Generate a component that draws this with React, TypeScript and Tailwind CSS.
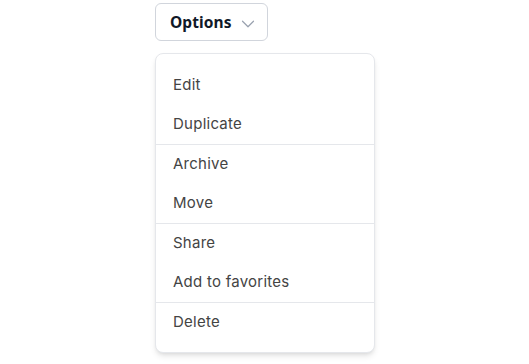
import React from "react";
import { ChevronDown } from "lucide-react";

const groups = [
  ["Edit", "Duplicate"],
  ["Archive", "Move"],
  ["Share", "Add to favorites"],
  ["Delete"],
];

const App = () => {
  return (
    <div className="min-h-[364px] w-full bg-white" style={{ fontFamily: "Inter, sans-serif" }}>
      <div className="ml-[155px] pt-[3px]">
        <button className="flex h-[38px] w-[113px] items-center gap-[5px] rounded-md border border-gray-300 bg-white pt-[2px] pl-[14px] text-[15.5px] font-bold tracking-[0.1px] text-gray-900" style={{ fontFamily: "'Noto Sans', sans-serif" }}>
          Options
          <ChevronDown size={22} strokeWidth={1.3} className="mt-[1px] text-gray-400" />
        </button>
        <div className="mt-3 w-[220px] rounded-lg border border-gray-200 bg-white pt-3 pb-2.5 shadow-md">
          {groups.map((g, i) => (
            <div key={i} className={i > 0 ? "border-t border-gray-200" : ""}>
              {g.map((item) => (
                <div key={item} className="flex h-[39px] items-center px-[17px] text-[15px] tracking-[0.25px] text-[#444]">
                  {item}
                </div>
              ))}
            </div>
          ))}
        </div>
      </div>
    </div>
  );
};

export default App;
